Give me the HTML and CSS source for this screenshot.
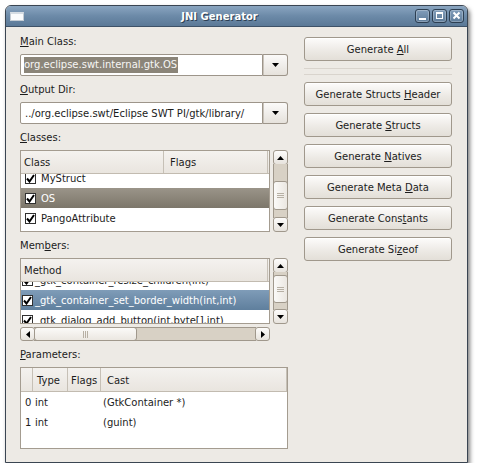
FILE: index.html
```html
<!DOCTYPE html>
<html>
<head>
<meta charset="utf-8">
<title>JNI Generator</title>
<link rel="stylesheet" href="styles.css">
</head>
<body>
<div class="window">
  <div class="titlebar">
    <span class="app-icon"></span>
    <span class="title">JNI Generator</span>
    <div class="wm-buttons">
      <span class="wm-btn"><svg width="13" height="12" viewBox="0 0 13 12"><rect x="3" y="8" width="7" height="2" fill="#fff"/></svg></span>
      <span class="wm-btn"><svg width="13" height="12" viewBox="0 0 13 12"><rect x="3.5" y="2.5" width="6" height="6" fill="none" stroke="#fff" stroke-width="1"/><rect x="3" y="2" width="7" height="2" fill="#fff"/></svg></span>
      <span class="wm-btn"><svg width="13" height="12" viewBox="0 0 13 12"><path d="M3.5 2.5 L9.5 8.5 M9.5 2.5 L3.5 8.5" stroke="#fff" stroke-width="2"/></svg></span>
    </div>
  </div>
  <div class="content">
    <div class="left">
      <div class="lbl first"><u>M</u>ain Class:</div>
      <div class="combo">
        <div class="entry"><span class="sel">org.eclipse.swt.internal.gtk.OS</span></div>
        <div class="combo-btn"><svg width="7" height="4" viewBox="0 0 7 4"><polygon points="0,0 7,0 3.5,4" fill="#000"/></svg></div>
      </div>

      <div class="lbl"><u>O</u>utput Dir:</div>
      <div class="combo">
        <div class="entry"><span class="txt">../org.eclipse.swt/Eclipse SWT PI/gtk/library/</span></div>
        <div class="combo-btn"><svg width="7" height="4" viewBox="0 0 7 4"><polygon points="0,0 7,0 3.5,4" fill="#000"/></svg></div>
      </div>

      <div class="lbl"><u>C</u>lasses:</div>
      <div class="panel classes">
        <div class="tbl">
          <div class="thead">
            <div class="th th-class">Class</div>
            <div class="th th-flags">Flags</div>
          </div>
          <div class="tbody">
            <div class="rows rows-classes">
              <div class="row"><span class="chk"><svg width="9" height="9" viewBox="0 0 9 9"><path d="M1 4.5 L3.5 7.5 L8 1" fill="none" stroke="#000" stroke-width="2"/></svg></span><span class="cell">MyStruct</span></div>
              <div class="row sel-gray"><span class="chk"><svg width="9" height="9" viewBox="0 0 9 9"><path d="M1 4.5 L3.5 7.5 L8 1" fill="none" stroke="#000" stroke-width="2"/></svg></span><span class="cell">OS</span></div>
              <div class="row"><span class="chk"><svg width="9" height="9" viewBox="0 0 9 9"><path d="M1 4.5 L3.5 7.5 L8 1" fill="none" stroke="#000" stroke-width="2"/></svg></span><span class="cell">PangoAttribute</span></div>
              <div class="row"><span class="chk"></span><span class="cell"></span></div>
            </div>
          </div>
        </div>
        <div class="vscroll">
          <div class="sbtn"><svg width="7" height="4" viewBox="0 0 7 4"><polygon points="0,4 7,4 3.5,0" fill="#000"/></svg></div>
          <div class="trough"><div class="thumb thumb-classes"><span class="grip"></span></div></div>
          <div class="sbtn"><svg width="7" height="4" viewBox="0 0 7 4"><polygon points="0,0 7,0 3.5,4" fill="#000"/></svg></div>
        </div>
      </div>

      <div class="lbl">Mem<u>b</u>ers:</div>
      <div class="members-wrap">
        <div class="panel members">
          <div class="tbl">
            <div class="thead">
              <div class="th th-method">Method</div>
            </div>
            <div class="tbody">
              <div class="rows rows-members">
                <div class="row"><span class="chk m"><svg width="9" height="9" viewBox="0 0 9 9"><path d="M1 4.5 L3.5 7.5 L8 1" fill="none" stroke="#000" stroke-width="2"/></svg></span><span class="cell m">_gtk_container_resize_children(int)</span></div>
                <div class="row sel-blue"><span class="chk m"><svg width="9" height="9" viewBox="0 0 9 9"><path d="M1 4.5 L3.5 7.5 L8 1" fill="none" stroke="#000" stroke-width="2"/></svg></span><span class="cell m">_gtk_container_set_border_width(int,int)</span></div>
                <div class="row"><span class="chk m"><svg width="9" height="9" viewBox="0 0 9 9"><path d="M1 4.5 L3.5 7.5 L8 1" fill="none" stroke="#000" stroke-width="2"/></svg></span><span class="cell m">_gtk_dialog_add_button(int,byte[],int)</span></div>
              </div>
            </div>
          </div>
          <div class="vscroll">
            <div class="sbtn"><svg width="7" height="4" viewBox="0 0 7 4"><polygon points="0,4 7,4 3.5,0" fill="#000"/></svg></div>
            <div class="trough"><div class="thumb thumb-members"><span class="grip"></span></div></div>
            <div class="sbtn"><svg width="7" height="4" viewBox="0 0 7 4"><polygon points="0,0 7,0 3.5,4" fill="#000"/></svg></div>
          </div>
        </div>
        <div class="hscroll">
          <div class="sbtn h"><svg width="4" height="7" viewBox="0 0 4 7"><polygon points="4,0 4,7 0,3.5" fill="#000"/></svg></div>
          <div class="htrough"><div class="hthumb"><span class="hgrip"></span></div></div>
          <div class="sbtn h"><svg width="4" height="7" viewBox="0 0 4 7"><polygon points="0,0 0,7 4,3.5" fill="#000"/></svg></div>
        </div>
      </div>

      <div class="lbl"><u>P</u>arameters:</div>
      <div class="tbl params">
        <div class="thead ph">
          <div class="th p0"></div>
          <div class="th p1">Type</div>
          <div class="th p2">Flags</div>
          <div class="th p3">Cast</div>
        </div>
        <div class="tbody">
          <div class="prow"><span class="pc c0">0</span><span class="pc c1">int</span><span class="pc c2"></span><span class="pc c3">(GtkContainer *)</span></div>
          <div class="prow"><span class="pc c0">1</span><span class="pc c1">int</span><span class="pc c2"></span><span class="pc c3">(guint)</span></div>
        </div>
      </div>
    </div>

    <div class="right">
      <div class="btn"><span>Generate <u>A</u>ll</span></div>
      <div class="sep"></div>
      <div class="btn"><span>Generate Structs <u>H</u>eader</span></div>
      <div class="btn"><span>Generate <u>S</u>tructs</span></div>
      <div class="btn"><span>Generate <u>N</u>atives</span></div>
      <div class="btn"><span>Generate Meta <u>D</u>ata</span></div>
      <div class="btn"><span>Generate Cons<u>t</u>ants</span></div>
      <div class="btn"><span>Generate Si<u>z</u>eof</span></div>
    </div>
  </div>
</div>
</body>
</html>
```

FILE: styles.css
```css
* { box-sizing: border-box; }
html, body { margin: 0; padding: 0; background: #ffffff; }
body {
  padding: 5px 0 0 5px;
  font-family: "DejaVu Sans", sans-serif;
  font-size: 10px;
  color: #1c1c1c;
}
u { text-decoration: underline; text-underline-offset: 1px; }

.window {
  width: 463px;
  height: 458px;
  border: 1px solid #3a4552;
  border-radius: 6px 6px 0 0;
  background: #edeae5;
  box-shadow: 2px 3px 4px rgba(0,0,0,0.5);
  overflow: hidden;
  display: flex;
  flex-direction: column;
}

/* title bar */
.titlebar {
  height: 21px;
  flex: none;
  display: flex;
  align-items: center;
  padding: 0 3px 0 4px;
  background: linear-gradient(#8aa5c0, #6c8aa8 50%, #5b7997);
  border-bottom: 1px solid #3e5268;
}
.app-icon {
  width: 14px;
  height: 9px;
  background: #fbfcfd;
  border: 1px solid #c4ccd4;
  border-top: 2px solid #d6dde4;
}
.title {
  flex: 1;
  text-align: center;
  color: #ffffff;
  font-weight: bold;
  font-size: 10px;
  text-shadow: 1px 1px 0 #2c3f53;
}
.wm-buttons { display: flex; gap: 2px; }
.wm-btn {
  width: 15px;
  height: 14px;
  border: 1px solid #2d3f52;
  border-radius: 3px;
  background: linear-gradient(#819dba, #5e7c9a);
  box-shadow: inset 0 0 0 1px rgba(255,255,255,0.25);
  display: flex;
  align-items: center;
  justify-content: center;
}

/* content */
.content {
  flex: 1;
  display: flex;
  gap: 16px;
  padding: 8px 15px 0 14px;
}
.left { width: 268px; display: flex; flex-direction: column; }
.right { width: 148px; display: flex; flex-direction: column; padding-top: 2px; }

.lbl { height: 14px; line-height: 14px; margin-top: 7px; margin-bottom: 5px; color: #1c1c1c; }
.lbl.first { margin-top: 0; }

/* combo */
.combo { height: 22px; display: flex; }
.entry {
  flex: 1;
  background: #ffffff;
  border: 1px solid #9d958a;
  border-radius: 2px 0 0 2px;
  display: flex;
  align-items: center;
  padding-left: 3px;
}
.entry .sel {
  background: #8b8579;
  color: #f7f6f4;
  line-height: 16px;
  padding-right: 1px;
}
.entry .txt { padding-left: 1px; }
.combo-btn {
  width: 25px;
  border: 1px solid #9d958a;
  border-left: none;
  border-radius: 0 3px 3px 0;
  background: linear-gradient(#fbfaf9, #e6e2dc);
  box-shadow: inset 1px 0 0 #c9c3ba;
  display: flex;
  align-items: center;
  justify-content: center;
}

/* tables */
.panel { display: flex; gap: 3px; }
.classes { height: 82px; }
.members { height: 66px; }
.tbl {
  width: 250px;
  border: 1px solid #a49c90;
  background: #ffffff;
  display: flex;
  flex-direction: column;
  overflow: hidden;
}
.thead {
  height: 23px;
  flex: none;
  display: flex;
  background: linear-gradient(#f4f2ef, #e9e5df);
  border-bottom: 1px solid #c2bbb0;
}
.th {
  line-height: 20px;
  padding-top: 2px;
  border-right: 1px solid #c6c0b6;
  white-space: nowrap;
  overflow: hidden;
}
.th-class { width: 143px; padding-left: 3px; }
.th-flags { flex: none; width: 104px; padding-left: 6px; }
.th-method { width: 247px; padding-left: 3px; }
.tbody { flex: 1; overflow: hidden; }
.rows-classes { margin-top: -6px; }
.rows-members { margin-top: -12px; }
.row {
  height: 20px;
  display: flex;
  align-items: center;
  white-space: nowrap;
}
.chk {
  width: 11px;
  height: 11px;
  flex: none;
  margin-left: 4px;
  background: #ffffff;
  border: 1px solid #303030;
  display: flex;
  align-items: center;
  justify-content: center;
}
.chk.m { margin-left: 1px; }
.cell { margin-left: 5px; }
.cell.m { margin-left: 2px; }
.sel-gray { background: linear-gradient(#9a9489, #7c766a); color: #ffffff; }
.sel-blue { background: linear-gradient(#7f9cb8, #5f7f9d); color: #ffffff; }

/* scrollbars */
.vscroll { width: 15px; display: flex; flex-direction: column; }
.sbtn {
  height: 15px;
  flex: none;
  border: 1px solid #a0988c;
  border-radius: 3px;
  background: linear-gradient(#fdfcfb, #e7e3dd);
  display: flex;
  align-items: center;
  justify-content: center;
}
.trough {
  flex: 1;
  background: #d8d1c5;
  border-left: 1px solid #a0988c;
  border-right: 1px solid #a0988c;
  margin: -1px 0;
}
.thumb {
  margin: 0 -1px;
  border: 1px solid #a0988c;
  border-radius: 3px;
  background: linear-gradient(90deg, #fbfaf8, #ebe7e1);
  display: flex;
  align-items: center;
  justify-content: center;
}
.thumb-classes { margin-top: 17px; height: 29px; }
.thumb-members { margin-top: 3px; height: 28px; }
.grip {
  width: 7px;
  height: 5px;
  border-top: 1px solid #b7b0a4;
  border-bottom: 1px solid #b7b0a4;
  background: linear-gradient(transparent 1px, #b7b0a4 1px, #b7b0a4 2px, transparent 2px);
}

.members-wrap { display: flex; flex-direction: column; gap: 3px; }
.hscroll { width: 250px; height: 14px; display: flex; }
.sbtn.h { width: 15px; height: 14px; }
.htrough {
  flex: 1;
  background: #d8d1c5;
  border-top: 1px solid #a0988c;
  border-bottom: 1px solid #a0988c;
  margin: 0 -1px;
}
.hthumb {
  width: 103px;
  height: 14px;
  margin-top: -1px;
  border: 1px solid #a0988c;
  border-radius: 3px;
  background: linear-gradient(#fbfaf8, #ebe7e1);
  display: flex;
  align-items: center;
  justify-content: center;
}
.hgrip {
  width: 5px;
  height: 7px;
  border-left: 1px solid #b7b0a4;
  border-right: 1px solid #b7b0a4;
  background: linear-gradient(90deg, transparent 1px, #b7b0a4 1px, #b7b0a4 2px, transparent 2px);
}

/* parameters */
.params { width: 268px; height: 82px; }
.ph { height: 24px; }
.ph .th { line-height: 21px; }
.p0 { width: 12px; }
.p1 { width: 35px; padding-left: 4px; }
.p2 { width: 33px; padding-left: 3px; }
.p3 { width: 186px; padding-left: 6px; }
.prow { height: 20px; display: flex; align-items: center; white-space: nowrap; }
.pc { display: block; }
.c0 { width: 12px; padding-left: 4px; }
.c1 { width: 35px; padding-left: 2px; }
.c2 { width: 33px; }
.c3 { padding-left: 2px; }

/* buttons */
.btn {
  height: 24px;
  margin-bottom: 7px;
  border: 1px solid #a0988c;
  border-radius: 3px;
  background: linear-gradient(#fdfcfb, #ece9e4 60%, #e3dfd8);
  box-shadow: inset 0 1px 0 #ffffff;
  display: flex;
  align-items: center;
  justify-content: center;
  color: #1c1c1c;
  white-space: nowrap;
}
.sep {
  height: 7px;
  margin: 0 0 7px 0;
  border-top: 1px solid #d9d4cd;
  border-bottom: 1px solid #d9d4cd;
}
```
